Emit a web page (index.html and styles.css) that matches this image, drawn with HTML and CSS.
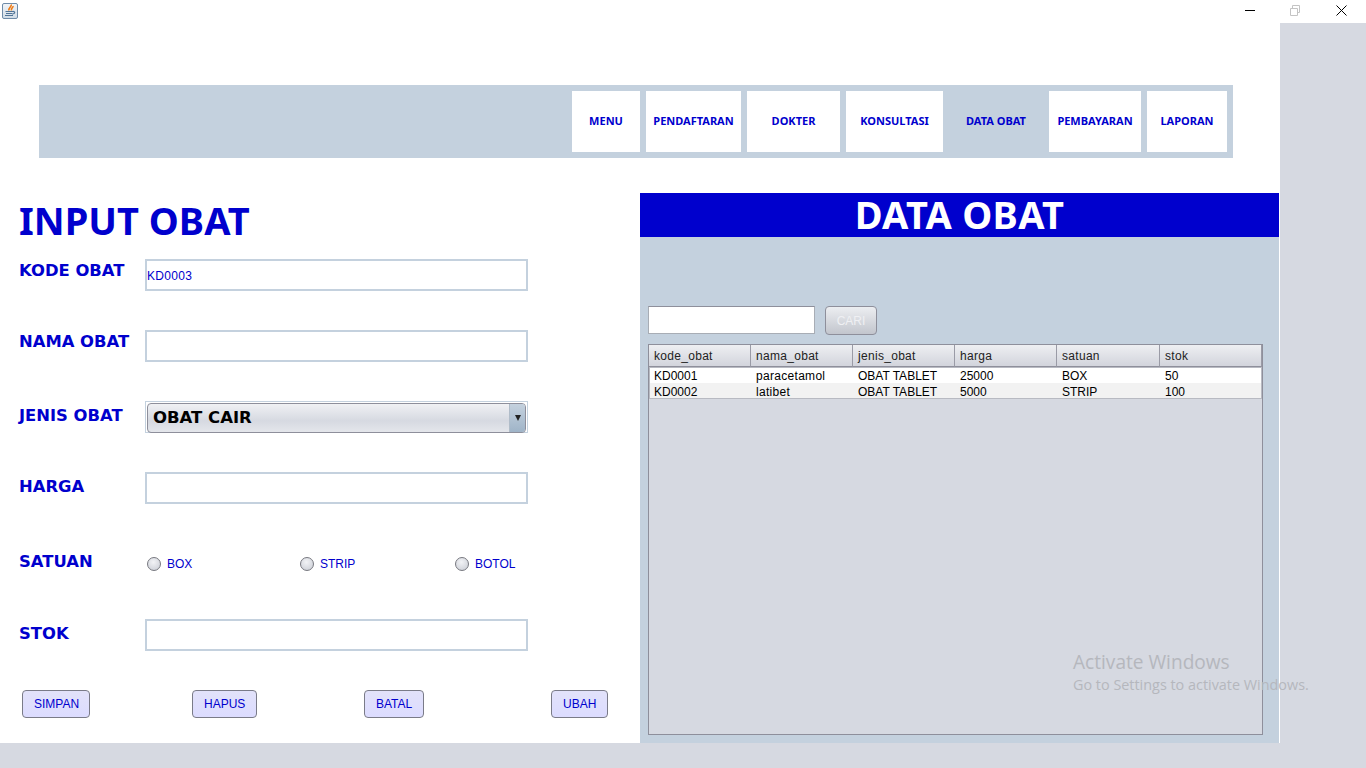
FILE: index.html
```html
<!DOCTYPE html>
<html lang="en">
<head>
<meta charset="utf-8">
<title>Data Obat</title>
<link rel="stylesheet" href="styles.css">
</head>
<body>

<div class="titlebar">
  <svg class="appicon" width="16" height="16" viewBox="0 0 16 16">
    <defs>
      <linearGradient id="iconbg" x1="0" y1="0" x2="0" y2="1">
        <stop offset="0" stop-color="#f2f5f8"/>
        <stop offset="1" stop-color="#cfdbe6"/>
      </linearGradient>
    </defs>
    <rect x="0.5" y="0.5" width="15" height="15" rx="1.5" fill="url(#iconbg)" stroke="#6f8ba8"/>
    <path d="M9 1.5 C10.5 3.5 6 4.5 7 7.5 M11 3 C11.5 4.5 8.5 5.5 9.5 7.5" fill="none" stroke="#ee7a14" stroke-width="1.6"/>
    <path d="M3.5 8.5 H10.5 M4 10.5 H10 M3 12.5 H11 M10.5 8.5 C13.5 8 13.5 11 10 11" fill="none" stroke="#4f7396" stroke-width="1.2"/>
  </svg>
  <div class="controls">
    <svg class="ctl-min" width="11" height="11" viewBox="0 0 11 11"><path d="M0 5.5 H10" stroke="#000" stroke-width="1"/></svg>
    <svg class="ctl-max" width="11" height="11" viewBox="0 0 11 11"><path d="M0.5 3.5 H7.5 V10.5 H0.5 Z M2.5 3.5 V0.5 H9.5 V7.5 H7.5" fill="none" stroke="#c4c4c4"/></svg>
    <svg class="ctl-close" width="11" height="11" viewBox="0 0 11 11"><path d="M0.5 0.5 L10.5 10.5 M10.5 0.5 L0.5 10.5" stroke="#000" stroke-width="1"/></svg>
  </div>
</div>

<div class="window">
  <div class="nav">
    <div class="nav-item">MENU</div>
    <div class="nav-item">PENDAFTARAN</div>
    <div class="nav-item">DOKTER</div>
    <div class="nav-item">KONSULTASI</div>
    <div class="nav-item nav-current">DATA OBAT</div>
    <div class="nav-item">PEMBAYARAN</div>
    <div class="nav-item">LAPORAN</div>
  </div>

  <div class="main">
    <div class="form-panel">
      <h1 class="form-title">INPUT OBAT</h1>

      <div class="row">
        <div class="label label-high">KODE OBAT</div>
        <div class="field">KD0003</div>
      </div>
      <div class="row">
        <div class="label label-high">NAMA OBAT</div>
        <div class="field"></div>
      </div>
      <div class="row">
        <div class="label">JENIS OBAT</div>
        <div class="combo">
          <div class="combo-inner">
            <span class="combo-text">OBAT CAIR</span>
            <span class="combo-btn"><span class="combo-arrow"></span></span>
          </div>
        </div>
      </div>
      <div class="row">
        <div class="label">HARGA</div>
        <div class="field"></div>
      </div>
      <div class="row row-radio">
        <div class="label label-radio">SATUAN</div>
        <div class="radios">
          <label class="radio"><span class="radio-dot"></span>BOX</label>
          <label class="radio"><span class="radio-dot"></span>STRIP</label>
          <label class="radio"><span class="radio-dot"></span>BOTOL</label>
        </div>
      </div>
      <div class="row">
        <div class="label">STOK</div>
        <div class="field"></div>
      </div>

      <div class="buttons">
        <div><span class="btn btn-simpan">SIMPAN</span></div>
        <div><span class="btn">HAPUS</span></div>
        <div><span class="btn">BATAL</span></div>
        <div><span class="btn">UBAH</span></div>
      </div>
    </div>

    <div class="data-panel">
      <div class="data-title">DATA OBAT</div>
      <div class="search">
        <div class="search-input"></div>
        <div class="search-btn">CARI</div>
      </div>
      <div class="table-box">
        <table class="grid">
          <thead>
            <tr><th>kode_obat</th><th>nama_obat</th><th>jenis_obat</th><th>harga</th><th>satuan</th><th>stok</th></tr>
          </thead>
          <tbody>
            <tr><td>KD0001</td><td>paracetamol</td><td>OBAT TABLET</td><td>25000</td><td>BOX</td><td>50</td></tr>
            <tr class="alt"><td>KD0002</td><td>latibet</td><td>OBAT TABLET</td><td>5000</td><td>STRIP</td><td>100</td></tr>
          </tbody>
        </table>
      </div>
    </div>
  </div>
</div>

<div class="watermark">
  <div class="wm-big">Activate Windows</div>
  <div class="wm-small">Go to Settings to activate Windows.</div>
</div>

</body>
</html>
```

FILE: styles.css
```css
html, body { margin: 0; padding: 0; }
body { width: 1366px; height: 768px; overflow: hidden; background: #d6d9e1; font-family: "Liberation Sans", Arial, sans-serif; position: relative; }

.titlebar { height: 23px; background: #fff; display: flex; justify-content: space-between; }
.appicon { margin: 3px 0 0 2px; }
.controls { width: 122px; display: flex; align-items: flex-start; padding-top: 5px; box-sizing: border-box; }
.ctl-min { margin-left: 1px; }
.ctl-max { margin-left: 34px; }
.ctl-close { margin-left: 35px; }

.window { width: 1280px; height: 720px; background: #fff; padding-top: 62px; box-sizing: border-box; }

.nav { margin-left: 39px; width: 1194px; height: 73px; padding: 6px; box-sizing: border-box; background: #c4d1de;
       display: grid; grid-template-columns: 68px 95px 93px 97px 94px 92px 80px; column-gap: 6px; justify-content: end; }
.nav-item { background: #fff; color: #0000cd; font: bold 11px "Noto Sans", sans-serif; display: flex; align-items: center; justify-content: center; padding-bottom: 2px; }
.nav-current { background: none; }

.main { display: flex; margin-top: 35px; height: 550px; }

.form-panel { width: 640px; }
.form-title { margin: 6px 0 0 19px; height: 60px; font: bold 38px/42px "Noto Sans", sans-serif; color: #0000cd; }

.row { display: flex; height: 32px; margin-bottom: 39px; align-items: flex-start; }
.row-radio { height: 38px; margin-bottom: 38px; }
.label { width: 126px; margin-left: 19px; margin-top: 4px; font: bold 16.4px/22px "DejaVu Sans", sans-serif; color: #0000cd; white-space: nowrap; }
.label-high { margin-top: 1px; }
.label-radio { margin-top: 8px; }
.field { width: 383px; height: 32px; box-sizing: border-box; border: 2px solid #c4d1de; color: #0000cd; font-size: 12px; letter-spacing: .3px; line-height: 31px; }

.combo { width: 383px; height: 32px; box-sizing: border-box; border: 1px solid #c4d1de; padding: 1px; }
.combo-inner { height: 28px; border: 1px solid #8e8f9b; border-radius: 4px; display: flex; justify-content: space-between;
               background: linear-gradient(#f0f1f4, #d6d9e1 60%, #e4e6eb); }
.combo-text { padding-left: 5px; font: bold 16.5px/28px "DejaVu Sans", sans-serif; color: #000; }
.combo-btn { width: 15px; background: linear-gradient(#c4d1de, #9fb4c8); border-left: 1px solid #b0bcc9; border-radius: 0 3px 3px 0; display: flex; align-items: center; justify-content: center; }
.combo-arrow { width: 0; height: 0; border-left: 3px solid transparent; border-right: 3px solid transparent; border-top: 6px solid #222; }

.radios { display: grid; grid-template-columns: 153px 155px auto; margin-left: 2px; padding-top: 13px; }
.radio { display: flex; align-items: center; gap: 6px; color: #0000cd; font-size: 12px; line-height: 16px; }
.radio-dot { width: 12px; height: 12px; border: 1px solid #77787f; border-radius: 50%; background: radial-gradient(circle at 45% 35%, #f2f3f6, #c8cbd3); }

.buttons { display: grid; grid-template-columns: 170px 172px 187px auto; margin-left: 22px; margin-top: 5px; }
.btn { display: inline-block; height: 26px; padding: 0 11px; border: 1px solid #7a7b88; border-radius: 4px; background: linear-gradient(#e2e2fa, #dcdcff);
       color: #0000cd; font-size: 12px; line-height: 27px; }
.btn-simpan { padding-right: 10px; }

.data-panel { width: 639px; background: #c4d1de; }
.data-title { height: 44px; background: #0000cd; color: #fff; text-align: center; font: bold 38px/42px "Noto Sans", sans-serif; letter-spacing: .3px; }

.search { display: flex; margin: 69px 0 0 8px; gap: 10px; align-items: flex-start; }
.search-input { width: 167px; height: 28px; box-sizing: border-box; background: #fff; border: 1px solid #a8adb5; border-top-color: #8e8f9b; }
.search-btn { width: 52px; height: 29px; box-sizing: border-box; border: 1px solid #8e8f9b; border-radius: 4px; background: linear-gradient(#eceef1, #c2c5cd);
              color: #eff0f3; font-size: 12px; line-height: 29px; text-align: center; }

.table-box { margin: 9px 0 0 8px; width: 615px; height: 391px; box-sizing: border-box; background: #d6d9e1; border: 1px solid #8e8f9b; }
.grid { width: 613px; table-layout: fixed; border-collapse: separate; border-spacing: 0; font-size: 12px; color: #000; }
.grid th { height: 22px; padding: 0 0 0 5px; box-sizing: border-box; font-weight: normal; text-align: left; color: #222; letter-spacing: .3px;
           background: linear-gradient(#eeeff2, #d2d4dc); border-right: 1px solid #9a9ba6; border-bottom: 1px solid #8e8f9b; }
.grid th:nth-child(1), .grid th:nth-child(2), .grid th:nth-child(3), .grid th:nth-child(4) { width: 102px; }
.grid th:nth-child(5) { width: 103px; }
.grid td { height: 13px; padding: 2px 0 0 5px; line-height: 13px; background: #fff; white-space: nowrap; }
.grid td:nth-child(2) { letter-spacing: .3px; }
.grid td:first-child { padding-left: 4px; border-left: 1px solid #b8bac2; }
.grid td:last-child { border-right: 1px solid #b8bac2; }
.grid tbody tr:first-child td { border-top: 1px solid #b8bac2; }
.grid .alt td { height: 11px; padding-top: 4px; line-height: 11px; background: #f2f2f2; border-bottom: 1px solid #b8bac2; }

.watermark { position: absolute; left: 1073px; top: 650px; color: #b5b7bd; font-family: "Open Sans", sans-serif; white-space: nowrap; pointer-events: none; }
.wm-big { font-size: 19.1px; line-height: 25px; }
.wm-small { font-size: 14.4px; line-height: 20px; }
```
